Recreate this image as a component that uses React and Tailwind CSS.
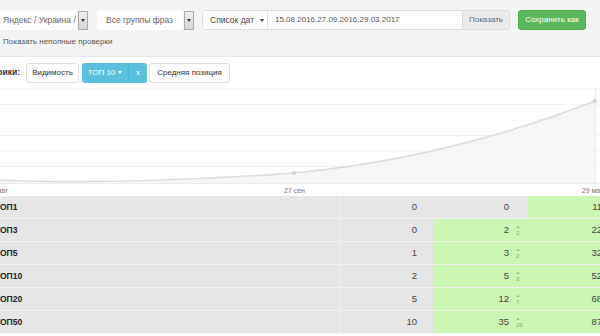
const rows = [
  { name: 'ТОП1', a: 0, b: 0, d: null, c: 11, bGreen: false },
  { name: 'ТОП3', a: 0, b: 2, d: 2, c: 22, bGreen: true },
  { name: 'ТОП5', a: 1, b: 3, d: 2, c: 32, bGreen: true },
  { name: 'ТОП10', a: 2, b: 5, d: 3, c: 52, bGreen: true },
  { name: 'ТОП20', a: 5, b: 12, d: 7, c: 68, bGreen: true },
  { name: 'ТОП50', a: 10, b: 35, d: 26, c: 87, bGreen: true },
]

function SelectBox({ label, width, textPad }) {
  return (
    <div className="flex h-[19px] items-stretch">
      <div
        className={`bg-white overflow-hidden whitespace-nowrap flex items-center text-[8.5px] text-[#666] ${width} ${textPad}`}
      >
        {label}
      </div>
      <div className="ml-[1px] w-[10px] bg-gradient-to-b from-[#f0f0f0] to-[#d6d6d6] border border-[#aaa] flex items-center justify-center">
        <span className="block w-0 h-0 border-l-[2.5px] border-r-[2.5px] border-t-[3px] border-l-transparent border-r-transparent border-t-[#333]" />
      </div>
    </div>
  )
}

function Chart() {
  const grid = [1, 16.5, 32, 47.5, 63, 78.5, 94]
  return (
    <svg width="600" height="108" viewBox="0 0 600 108" className="block">
      {grid.map((y) => (
        <line key={y} x1="0" x2="600" y1={y} y2={y} stroke="#f3f3f3" strokeWidth="1" />
      ))}
      <path
        d="M0,92 C80,96 200,92 294,85 C400,75 500,50 595,13 L595,95 L0,95 Z"
        fill="#f6f6f6"
      />
      <line x1="595.5" x2="595.5" y1="0" y2="95" stroke="#ececec" />
      <line x1="0" x2="600" y1="95.5" y2="95.5" stroke="#ececec" />
      <path
        d="M0,92 C80,96 200,92 294,85 C400,75 500,50 595,13"
        fill="none"
        stroke="#dcdcdc"
        strokeWidth="1.5"
      />
      <circle cx="294" cy="85" r="2" fill="#d0d0d0" />
      <circle cx="595" cy="13" r="2" fill="#d0d0d0" />
      <g fontSize="7" fill="#777" fontFamily='"Liberation Sans", Arial, sans-serif'>
        <text x="-2" y="105" textAnchor="middle">15 авг</text>
        <text x="294.5" y="105" textAnchor="middle">27 сен</text>
        <text x="593" y="105" textAnchor="middle">29 мар</text>
      </g>
    </svg>
  )
}

export default function App() {
  return (
    <div
      className="w-[600px] h-[336px] overflow-hidden bg-white text-[#333]"
      style={{ fontFamily: '"Liberation Sans", Arial, sans-serif' }}
    >
      <div className="bg-[#f4f4f4] h-[57px] border-b border-[#e8e8e8]">
        <div className="flex items-center pt-[10px] h-[30px] whitespace-nowrap">
          <SelectBox label="Яндекс / Украина / Все регионы" width="w-[77px]" textPad="pl-[3px]" />
          <div className="ml-[9px]">
            <SelectBox label="Все группы фраз" width="w-[86px]" textPad="pl-[9px]" />
          </div>
          <div className="ml-[8px] flex h-[20px]">
            <div className="w-[66px] bg-white border border-[#ddd] rounded-l-[3px] flex items-center pl-[7px] text-[8.5px] text-[#444]">
              Список дат
              <span className="ml-[6px] block w-0 h-0 border-l-[2.5px] border-r-[2.5px] border-t-[3px] border-l-transparent border-r-transparent border-t-[#444]" />
            </div>
            <div className="w-[194px] bg-white border-y border-[#ddd] flex items-center pl-[7px] text-[8px] text-[#555]">
              15.08.2016,27.09.2016,29.03.2017
            </div>
            <div className="w-[48px] bg-[#ececec] border border-[#ddd] rounded-r-[3px] flex items-center justify-center text-[8px] text-[#666]">
              Показать
            </div>
          </div>
          <div className="ml-[8px] h-[20px] w-[68px] bg-[#5cb85c] border border-[#4cae4c] rounded-[3px] flex items-center justify-center text-[8px] text-white">
            Сохранить как
          </div>
        </div>
        <div className="pl-[3px] pt-[6px] text-[8px] text-[#555]">Показать неполные проверки</div>
      </div>

      <div className="h-[31px] flex items-center whitespace-nowrap">
        <div className="w-[20px] flex justify-end text-[8.5px] font-bold text-[#333]">
          Графики:
        </div>
        <div className="ml-[6px] h-[20px] w-[53px] border border-[#ddd] rounded-[3px] flex items-center justify-center text-[8px] text-[#333]">
          Видимость
        </div>
        <div className="ml-[3px] h-[20px] flex rounded-[3px] overflow-hidden">
          <div className="w-[47px] bg-[#5bc0de] flex items-center justify-center text-[8px] text-white border-r border-[#46b8da]">
            ТОП 10
            <span className="ml-[3px] block w-0 h-0 border-l-[2.5px] border-r-[2.5px] border-t-[3px] border-l-transparent border-r-transparent border-t-white" />
          </div>
          <div className="w-[18px] bg-[#5bc0de] flex items-center justify-center text-[8px] text-white">x</div>
        </div>
        <div className="ml-[2px] h-[20px] w-[81px] border border-[#ddd] rounded-[3px] flex items-center justify-center text-[8px] text-[#333]">
          Средняя позиция
        </div>
      </div>

      <Chart />

      <div className="w-[620px]">
        {rows.map((r) => (
          <div key={r.name} className="flex h-[23px] text-[9.5px] border-b border-[#f2f2f2]">
            <div className="w-[340px] bg-[#e6e6e6] border-r border-[#f2f2f2] flex items-center font-bold text-[8.5px] text-[#222]">
              <span className="-ml-[5px]">{r.name}</span>
            </div>
            <div className="w-[93px] bg-[#e6e6e6] flex items-center justify-end pr-[16px] text-[#444]">{r.a}</div>
            <div
              className={`w-[95px] flex items-center justify-end ${r.bGreen ? 'bg-[#ccf6b3]' : 'bg-[#e6e6e6]'} text-[#444]`}
            >
              <span>{r.b}</span>
              <span className="w-[19px] pl-[7px] flex flex-col items-start leading-[6px] text-[6px] text-[#6cb86c]">
                {r.d !== null && (
                  <>
                    <span className="text-[4px]">▲</span>
                    <span>{r.d}</span>
                  </>
                )}
              </span>
            </div>
            <div className="w-[82px] bg-[#ccf6b3] flex items-center justify-end pr-[8px] text-[#444]">{r.c}</div>
          </div>
        ))}
      </div>
    </div>
  )
}
